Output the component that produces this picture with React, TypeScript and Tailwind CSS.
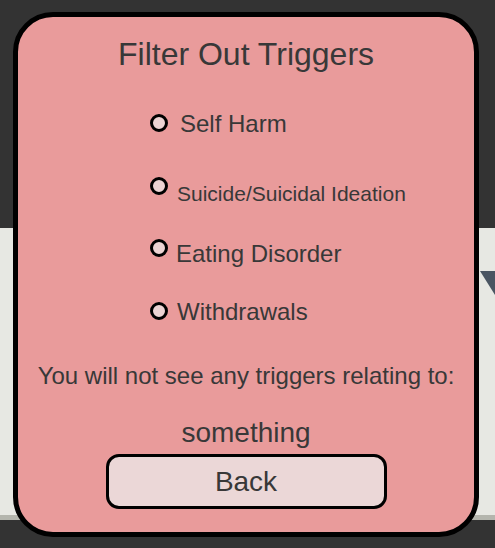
const font = { fontFamily: '"Liberation Sans", Arial, sans-serif' }

const triggers = [
  { label: 'Self Harm', row: 'mt-[42px]', dot: 'mt-[2px]', text: 'mt-0 ml-[12px] text-[24px]' },
  { label: 'Suicide/Suicidal Ideation', row: 'mt-[41px]', dot: 'mt-0', text: 'mt-[6px] ml-[9px] text-[21px]' },
  { label: 'Eating Disorder', row: 'mt-[35px]', dot: 'mt-0', text: 'mt-[3px] ml-[8px] text-[24px]' },
  { label: 'Withdrawals', row: 'mt-[34px]', dot: 'mt-[2px]', text: 'mt-0 ml-[9px] text-[24px]' },
]

function Radio() {
  return <div className="h-[18px] w-[18px] shrink-0 rounded-full border-[3px] border-black bg-[#ecd3d3]" />
}

export default function App() {
  return (
    <div className="relative h-[548px] w-[495px] overflow-hidden bg-[#333333]" style={font}>
      {/* page behind the modal */}
      <div className="pt-[228px]">
        <div className="flex h-[292px] justify-end border-b-[5px] border-[#b4b5ad] bg-[#e7e8e3]">
          <svg width="15" height="24" viewBox="0 0 15 24" className="mt-[43px]">
            <polygon points="0,0 15,0 15,24" fill="#4a5562" />
          </svg>
        </div>
      </div>

      {/* modal */}
      <div className="absolute left-[13px] top-[12px] flex h-[525px] w-[466px] flex-col rounded-[40px] border-[5px] border-black bg-[#e99b9b] pt-[21px] text-[#383838]">
        <h1 className="text-center text-[32px] leading-none">Filter Out Triggers</h1>

        {triggers.map((t) => (
          <div key={t.label} className={`flex items-start pl-[132px] ${t.row}`}>
            <div className={t.dot}>
              <Radio />
            </div>
            <span className={`leading-none ${t.text}`}>{t.label}</span>
          </div>
        ))}

        <p className="mt-[40px] text-center text-[24px] leading-none">You will not see any triggers relating to:</p>
        <p className="mt-[31px] text-center text-[28px] leading-none">something</p>

        <button className="mx-auto mt-[7px] h-[55px] w-[281px] rounded-[13px] border-[3px] border-black bg-[#ebd7d7] text-[28px] leading-none text-[#383838]">
          Back
        </button>
      </div>
    </div>
  )
}
